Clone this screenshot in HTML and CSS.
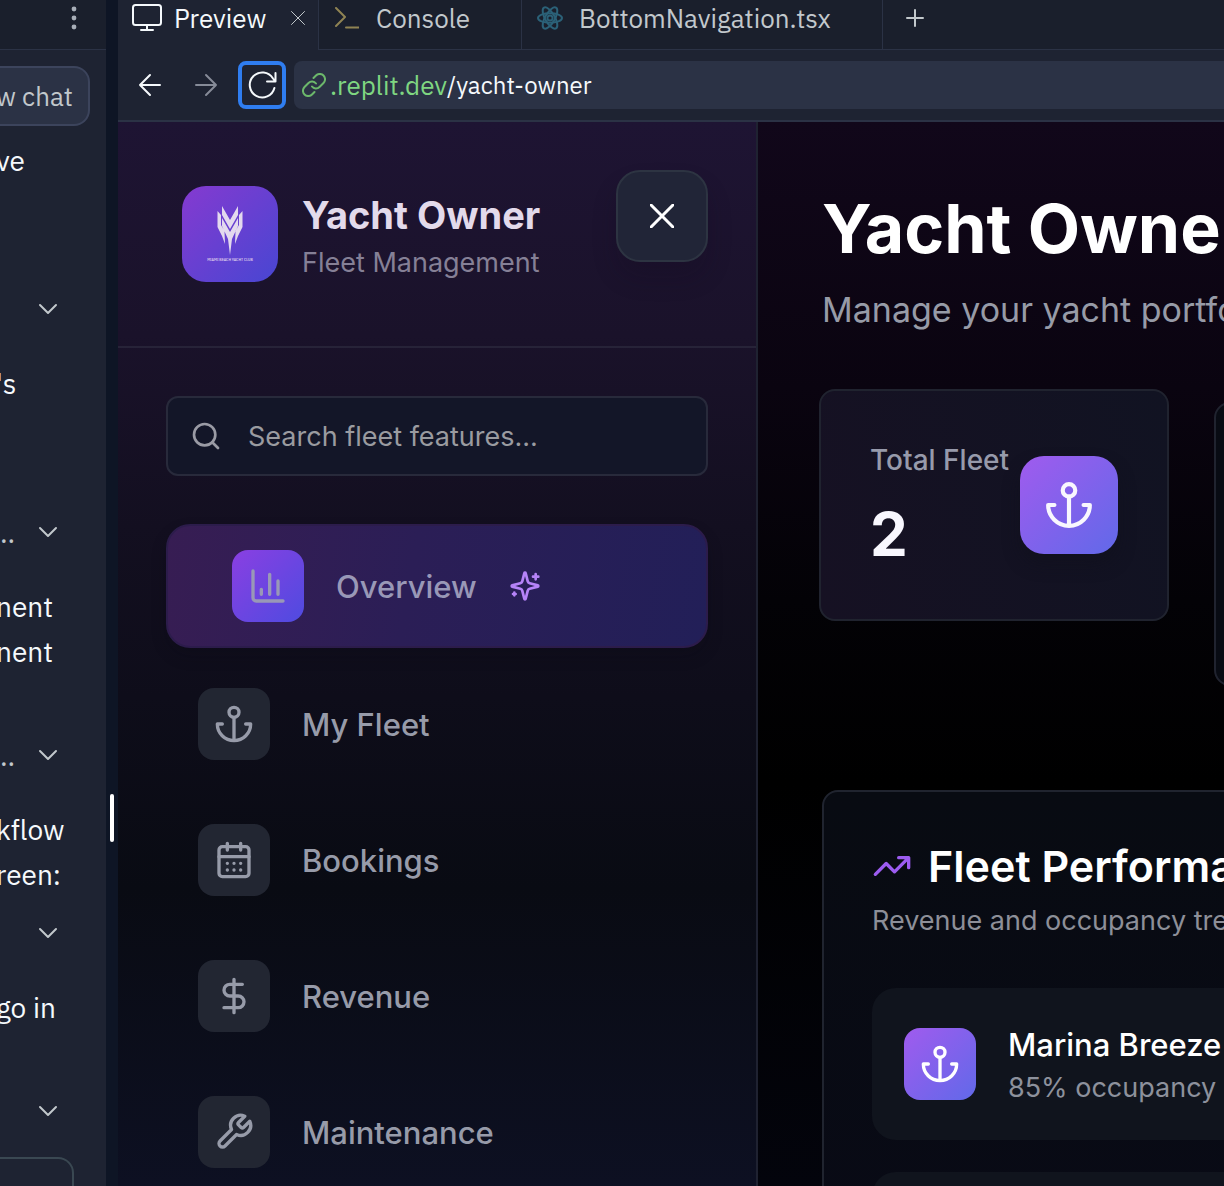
FILE: index.html
```html
<!DOCTYPE html>
<html lang="en">
<head>
<meta charset="utf-8">
<title>Yacht Owner</title>
<link rel="stylesheet" href="styles.css">
</head>
<body>
<svg class="sprite" aria-hidden="true">
  <symbol id="anchor" viewBox="0 0 24 24"><path d="M12 22V8M5 12H2a10 10 0 0 0 20 0h-3"/><circle cx="12" cy="5" r="3"/></symbol>
  <symbol id="chevron" viewBox="0 0 24 24"><path d="M4 8l8 8 8-8"/></symbol>
</svg>
<div class="workspace">
  <aside class="chat">
    <div class="chat-head">
      <button class="kebab" aria-label="More"><svg viewBox="0 0 6 24"><circle cx="3" cy="3" r="2.4"/><circle cx="3" cy="12" r="2.4"/><circle cx="3" cy="21" r="2.4"/></svg></button>
    </div>
    <button class="new-chat">w chat</button>
    <div class="messages">
      <p>ve<br><br><br></p>
      <button class="toggle" aria-label="Expand"><span></span><svg class="chev"><use href="#chevron"/></svg></button>
      <p>'s<br><br><br></p>
      <button class="toggle" aria-label="Expand"><span>..</span><svg class="chev"><use href="#chevron"/></svg></button>
      <p>nent<br>nent<br><br></p>
      <button class="toggle" aria-label="Expand"><span>..</span><svg class="chev"><use href="#chevron"/></svg></button>
      <p>kflow<br>reen:</p>
      <button class="toggle" aria-label="Expand"><span></span><svg class="chev"><use href="#chevron"/></svg></button>
      <p>go in<br><br></p>
      <button class="toggle" aria-label="Expand"><span></span><svg class="chev"><use href="#chevron"/></svg></button>
    </div>
    <textarea class="composer" aria-label="Message"></textarea>
  </aside>
  <div class="splitter"><span class="grip"></span></div>
  <section class="pane">
    <div class="tabs">
      <div class="tab active">
        <svg class="i-monitor" viewBox="0 0 30 28"><rect x="1" y="1" width="28" height="20" rx="2.5"/><path d="M15 21v5M9 26h12"/></svg>
        <span>Preview</span>
        <button class="tab-close" aria-label="Close tab"><svg viewBox="0 0 14 14"><path d="M0.5 0.5l13 13M13.500 .5l-13 13"/></svg></button>
      </div>
      <div class="tab console">
        <svg class="i-term" viewBox="0 0 24 22"><path d="M1 1l9 9-9 9M11 20.500h13"/></svg>
        <span>Console</span>
      </div>
      <div class="tab file">
        <svg class="i-react" viewBox="0 0 26 26"><g transform="translate(13 13)"><ellipse rx="12" ry="4.800"/><ellipse rx="12" ry="4.800" transform="rotate(60)"/><ellipse rx="12" ry="4.800" transform="rotate(120)"/><circle r="2.600"/></g></svg>
        <span>BottomNavigation.tsx</span>
      </div>
      <button class="tab-add" aria-label="New tab"><svg viewBox="0 0 18 18"><path d="M9 1v16M1 9h16"/></svg></button>
    </div>
    <div class="toolbar">
      <button aria-label="Back"><svg class="nav-arrow" viewBox="0 0 24 24"><path d="M22 12H2M12 2L2 12l10 10"/></svg></button>
      <button class="dim" aria-label="Forward"><svg class="nav-arrow" viewBox="0 0 24 24"><path d="M2 12h20M12 2l10 10-10 10"/></svg></button>
      <button class="reload" aria-label="Reload"><svg viewBox="0 0 32 32"><path d="M28.400 19A12.500 12.500 0 1 1 27 9.500L29 12M29.500 4v8.500H21"/></svg></button>
      <div class="url">
        <svg viewBox="0 0 24 24"><path d="M10 13.500a5 5 0 0 0 7.500.5l4-4a5 5 0 0 0-7.500-7.500l-2.500 2.500M14 10.500a5 5 0 0 0-7.500-.5l-4 4A5 5 0 0 0 10 21.500l2.500-2.500"/></svg>
        <span class="host">.replit.dev</span><span class="path">/yacht-owner</span>
      </div>
    </div>
    <div class="app">
      <nav class="sidebar">
        <header class="side-head">
          <div class="brand">
            <div class="logo">
              <svg viewBox="0 0 26 50"><path d="M5 0l8 14 8-14v9l-8 14-8-14zM.5 5L4 9v10l3.500 6L8 38l-3-8-4.500-9zM25.500 5L22 9v10l-3.500 6-.5 13 3-8 4.500-9zM5 12l8 14 8-14v8l-6 13-2 16-2-16-6-13z"/></svg>
              <span>MIAMI BEACH YACHT CLUB</span>
            </div>
            <div class="brand-text"><strong>Yacht Owner</strong><span>Fleet Management</span></div>
          </div>
          <button class="close" aria-label="Close menu"><svg viewBox="0 0 24 24"><path d="M1 1l22 22M23 1L1 23"/></svg></button>
        </header>
        <div class="side-body">
          <label class="search">
            <svg viewBox="0 0 24 24"><circle cx="11" cy="11" r="8"/><path d="M21 21l-4.300-4.300"/></svg>
            <input type="text" placeholder="Search fleet features..." aria-label="Search fleet features">
          </label>
          <div class="menu">
            <a class="item current" href="#overview"><span class="tile"><svg viewBox="0 0 24 24"><path d="M3 3v16a2 2 0 0 0 2 2h16M13 17V5M18 17V9M8 17v-3"/></svg></span>Overview<svg class="spark" viewBox="0 0 24 24"><path d="M9.937 15.500A2 2 0 0 0 8.500 14.063l-6.135-1.582a.5.5 0 0 1 0-.962L8.500 9.936A2 2 0 0 0 9.937 8.500l1.582-6.135a.5.5 0 0 1 .963 0L14.063 8.500A2 2 0 0 0 15.500 9.937l6.135 1.581a.5.5 0 0 1 0 .964L15.500 14.063a2 2 0 0 0-1.437 1.437l-1.582 6.135a.5.5 0 0 1-.963 0zM20 3v4M22 5h-4M4 17v2M5 18H3"/></svg></a>
            <a class="item" href="#fleet"><span class="tile"><svg><use href="#anchor"/></svg></span>My Fleet</a>
            <a class="item" href="#bookings"><span class="tile"><svg viewBox="0 0 24 24"><rect x="3" y="4" width="18" height="18" rx="2"/><path d="M16 2v4M8 2v4M3 10h18M8 14h.01M12 14h.01M16 14h.01M8 18h.01M12 18h.01M16 18h.01"/></svg></span>Bookings</a>
            <a class="item" href="#revenue"><span class="tile"><svg viewBox="0 0 24 24"><path d="M12 2v20M17 5H9.500a3.500 3.500 0 0 0 0 7h5a3.500 3.500 0 0 1 0 7H6"/></svg></span>Revenue</a>
            <a class="item" href="#maintenance"><span class="tile"><svg viewBox="0 0 24 24"><path d="M14.700 6.300a1 1 0 0 0 0 1.400l1.600 1.600a1 1 0 0 0 1.400 0l3.770-3.770a6 6 0 0 1-7.940 7.940l-6.910 6.910a2.120 2.120 0 0 1-3-3l6.910-6.910a6 6 0 0 1 7.940-7.940l-3.760 3.760z"/></svg></span>Maintenance</a>
          </div>
        </div>
      </nav>
      <main class="main">
        <h1>Yacht Owne</h1>
        <p class="lead">Manage your yacht portfo</p>
        <div class="stats">
          <article class="stat">
            <div><span class="stat-label">Total Fleet</span><span class="stat-value">2</span></div>
            <span class="stat-icon"><svg><use href="#anchor"/></svg></span>
          </article>
          <article class="stat next"></article>
        </div>
        <section class="panel">
          <h2><svg viewBox="0 0 24 24"><path d="M22 7l-8.500 8.500-5-5L2 17M16 7h6v6"/></svg>Fleet Performa</h2>
          <p class="panel-sub">Revenue and occupancy tre</p>
          <div class="rows">
            <div class="row">
              <span class="tile bright"><svg><use href="#anchor"/></svg></span>
              <div class="row-text"><strong>Marina Breeze</strong><span>85% occupancy</span></div>
            </div>
            <div class="row"></div>
          </div>
        </section>
      </main>
    </div>
  </section>
</div>
</body>
</html>
```
FILE: styles.css
```css
* { box-sizing: border-box; }
html, body { margin: 0; height: 100%; }
body { background: #1e2332; overflow: hidden; font-family: Inter, sans-serif; color: #fff; }
button { border: 0; background: none; padding: 0; margin: 0; color: inherit; font: inherit; }
svg { display: block; flex: none; fill: none; stroke: currentColor; stroke-width: 2; stroke-linecap: round; stroke-linejoin: round; }
p, h1, h2 { margin: 0; white-space: nowrap; }
.sprite { position: absolute; width: 0; height: 0; }

.workspace { display: flex; height: 100vh; overflow: hidden; }

/* chat column */
.chat { flex: none; width: 106px; overflow: hidden; background: #1e2332; font: 28px/45px "IBM Plex Sans", Roboto, sans-serif; color: #f5f9fc; }
.chat-head { display: flex; justify-content: flex-end; height: 50px; padding: 6px 29px 0 0; background: #1a1f2c; border-bottom: 1px solid #2b3245; }
.kebab { width: 6px; height: 24px; color: #a8aeb8; }
.kebab svg { width: 6px; height: 24px; fill: currentColor; stroke: none; }
.new-chat { display: block; width: 90px; height: 60px; margin: 16px 0 12px; background: #2b3245; border: 2px solid #3c445c; border-left: 0; border-radius: 0 16px 16px 0; color: #c2c8cc; font-size: 26px; text-align: left; text-indent: -4px; }
.messages p { margin-left: -4px; }
.toggle { display: flex; align-items: center; justify-content: space-between; width: 100%; height: 44px; margin: 14px 0 30px; padding-right: 46px; color: #c2c8cc; }
.chev { width: 24px; height: 24px; }
.composer { display: block; width: 74px; height: 80px; resize: none; background: #1e2332; border: 2px solid #3a4852; border-left: 0; border-radius: 0 16px 0 0; }
.messages { margin-bottom: -6px; }
.splitter { flex: none; display: flex; align-items: center; justify-content: center; width: 12px; background: #0e1525; }
.grip { width: 4px; height: 48px; margin-top: 450px; border-radius: 2px; background: #fff; }

/* preview pane */
.pane { flex: 1; min-width: 0; display: flex; flex-direction: column; font-family: Inter, sans-serif; }
.tabs { flex: none; display: flex; height: 50px; background: #1a1f2c; font: 26px/36px "IBM Plex Sans", Roboto, sans-serif; color: #c2c8cc; }
.tab { display: flex; align-items: center; padding: 0 16px 14px; border-right: 1px solid #2b3245; border-bottom: 1px solid #2b3245; }
.tab.active { width: 201px; padding: 0 13px 15px 14px; background: #1e2332; border-bottom: 0; color: #f5f9fc; gap: 12px; }
.tab.active span { flex: 1; }
.tab-close svg { width: 14px; height: 14px; stroke-width: 1; color: #c2c8cc; }
.i-monitor { width: 30px; height: 28px; }
.console { width: 203px; gap: 17px; }
.file { width: 361px; padding-left: 15px; gap: 16px; }
.i-term { width: 24px; height: 22px; color: #8f8353; }
.i-react { width: 26px; height: 26px; color: #2b6178; }
.tab-add { flex: 1; padding: 0 0 13px 23px; border-bottom: 1px solid #2b3245; }
.tab-add svg { width: 18px; height: 18px; stroke-width: 2; }
.toolbar { flex: none; display: flex; gap: 8px; padding: 11px 0 11px 8px; background: #1e2332; border-bottom: 2px solid #2b3245; color: #f5f9fc; }
.toolbar button { flex: none; display: flex; align-items: center; justify-content: center; width: 48px; height: 48px; border-radius: 8px; }
.nav-arrow { width: 24px; height: 24px; }
.toolbar .dim { color: #868b98; }
.toolbar .reload { border: 4px solid #2f7df0; }
.reload svg { width: 32px; height: 32px; }
.url { flex: 1; display: flex; align-items: center; height: 48px; padding-left: 8px; background: #2b3245; border-radius: 8px 0 0 8px; font: 26px/36px "IBM Plex Sans", Roboto, sans-serif; }
.url svg { width: 24px; height: 24px; margin-right: 4px; color: #6cb86b; }
.host { color: #7fd681; }
.path { font-size: 24px; }
.app { flex: 1; min-height: 0; display: flex; overflow: hidden; }

/* fleet sidebar */
.sidebar { flex: none; width: 640px; overflow: hidden; border-right: 2px solid #1f2231; background: linear-gradient(#1e1433 0%, #1a122a 20%, #130f20 38%, #0e0d1a 54%, #090b13 72%, #0d1022 100%); }
.side-head { display: flex; justify-content: space-between; align-items: flex-start; padding: 48px; border-bottom: 2px solid #272338; }
.brand { display: flex; align-items: center; gap: 24px; padding: 16px; }
.logo { display: flex; flex-direction: column; align-items: center; gap: 1px; width: 96px; height: 96px; padding-top: 20px; border-radius: 24px; background: linear-gradient(135deg, #853ad0, #4846d2); color: #e3d9ee; }
.logo svg { width: 26px; height: 50px; fill: currentColor; stroke: none; }
.logo span { font: 500 4px/5px "IBM Plex Sans Condensed", "Roboto Condensed", "Liberation Sans Narrow", "Liberation Sans", sans-serif; white-space: nowrap; }
.brand-text { display: flex; flex-direction: column; white-space: nowrap; }
.brand-text strong { font-size: 38px; line-height: 58px; font-weight: 700; color: #e3daeb; }
.brand-text span { font-size: 27px; line-height: 38px; color: #858096; }
.close { flex: none; display: flex; align-items: center; justify-content: center; width: 92px; height: 92px; border: 2px solid #2d3442; border-radius: 24px; background: #212537; box-shadow: 0 16px 24px rgba(20, 10, 30, .2); }
.close svg { width: 24px; height: 24px; stroke-width: 3; }
.side-body { padding: 48px; }
.search { display: flex; align-items: center; gap: 26px; height: 80px; padding: 0 22px; border: 2px solid #282a3b; border-radius: 12px; background: #131628; color: #9a9ba5; }
.search svg { width: 32px; height: 32px; }
.search input { flex: 1; min-width: 0; border: 0; padding: 2px 0 0; outline: 0; background: none; font: 27px/40px Inter, sans-serif; color: #fff; }
.search input::placeholder { color: #9a9ba0; opacity: 1; }
.menu { display: flex; flex-direction: column; gap: 16px; margin-top: 48px; }
.item { display: flex; align-items: center; gap: 32px; height: 120px; padding: 0 32px; border-radius: 24px; font-size: 31px; font-weight: 500; color: #979ba9; text-decoration: none; }
.current { height: 124px; padding: 0 64px; border: 2px solid #2c1c4b; background: linear-gradient(100deg, #371d53, #2b1e56 45%, #221f58); box-shadow: 0 8px 16px rgba(8, 8, 20, .2); color: #9998b7; }
.tile { flex: none; display: flex; align-items: center; justify-content: center; width: 72px; height: 72px; border-radius: 16px; background: #222632; }
.tile svg { width: 40px; height: 40px; }
.current .tile { background: linear-gradient(135deg, #8a3fe2, #4f4be0); }
.spark { width: 32px; height: 32px; color: #b583f8; }

/* dashboard */
.main { flex: 1; min-width: 0; overflow: hidden; padding: 56px 0 0 64px; background: linear-gradient(#11071a 0%, #0a0410 25%, #030206 45%, #000 62%, #03040c 100%); }
h1 { font-size: 68px; line-height: 100px; font-weight: 700; }
.lead { margin-top: 4px; font-size: 34px; line-height: 56px; color: #979ba7; }
.stats { display: grid; grid-template-columns: 350px 350px; align-items: start; gap: 45px; margin: 51px 0 0 -3px; }
.stat { display: flex; justify-content: space-between; align-items: center; height: 232px; padding: 0 49px; border: 2px solid #20232f; border-radius: 16px; background: linear-gradient(75deg, #161123, #111322); }
.stat div { display: flex; flex-direction: column; }
.stat-label { font-size: 28px; line-height: 40px; font-weight: 500; color: #979aab; white-space: nowrap; }
.stat-value { font-size: 60px; line-height: 72px; margin-top: 18px; font-weight: 700; color: #f8f7fe; }
.stat-icon { flex: none; display: flex; align-items: center; justify-content: center; width: 98px; height: 98px; border-radius: 24px; background: linear-gradient(135deg, #a05bee, #6169e9); color: #f8f7fe; box-shadow: 0 10px 16px rgba(16, 16, 28, .5); }
.stat-icon svg { width: 50px; height: 50px; }
.next { height: 284px; margin-top: 13px; background: #080b13; }
.panel { margin: 104px -64px 0 0; height: 640px; padding: 46px 48px 0; border: 2px solid #20242f; border-radius: 16px; background: linear-gradient(#080b12, #090a17); }
h2 { display: flex; align-items: center; gap: 16px; font-size: 43px; line-height: 56px; font-weight: 600; }
h2 svg { width: 40px; height: 40px; color: #9c5cf0; }
.panel-sub { margin-top: 7px; font-size: 27px; line-height: 40px; color: #8d8f98; }
.rows { display: flex; flex-direction: column; gap: 32px; margin-top: 47px; width: 800px; }
.row { display: flex; align-items: center; gap: 32px; height: 152px; padding: 0 32px; border-radius: 24px; background: #10141d; }
.bright { background: linear-gradient(135deg, #a05bee, #6169e9); }
.row-text { display: flex; flex-direction: column; padding-top: 2px; white-space: nowrap; }
.row-text strong { font-size: 31px; line-height: 46px; font-weight: 500; }
.row-text span { font-size: 27px; line-height: 40px; color: #8d919c; }
```
